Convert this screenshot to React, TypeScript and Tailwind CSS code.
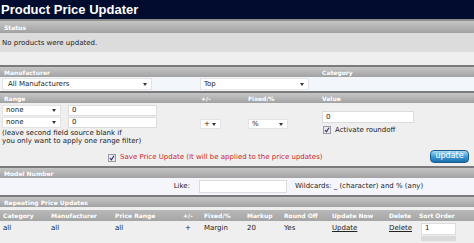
import React from 'react';

function HeaderBar({ children }: { children?: React.ReactNode }) {
  return (
    <div className="h-[12px] border-t-2 border-[#7a7a7a] bg-gradient-to-b from-[#c6c6c6] to-[#a2a2a2] flex items-center text-[6px] font-bold text-white">
      {children}
    </div>
  );
}

function FakeSelect({ value, className }: { value: string; className: string }) {
  return (
    <div className={`bg-white border border-[#e4e4e4] flex items-center justify-between pl-[3px] pr-[4px] text-[7px] text-[#222] ${className}`}>
      <span>{value}</span>
      <svg width="4" height="3" viewBox="0 0 4 3">
        <path d="M0 0 H4 L2 3 Z" fill="#333" />
      </svg>
    </div>
  );
}

function Check({ className }: { className?: string }) {
  return (
    <svg width="8" height="8" viewBox="0 0 8 8" className={className}>
      <rect x="0.5" y="0.5" width="7" height="7" fill="#e9e9ee" stroke="#9a9aa4" />
      <path d="M2 4 L3.4 5.8 L6 1.8" stroke="#2a2a66" strokeWidth="1.1" fill="none" />
    </svg>
  );
}

function TextBox({ value, className }: { value?: string; className: string }) {
  return (
    <div className={`bg-white border border-[#dcdcdc] flex items-center pl-[3px] text-[7px] text-[#222] ${className}`}>
      {value}
    </div>
  );
}

export default function App() {
  return (
    <div className="w-[474px] h-[243px] overflow-hidden bg-[#efefef] font-['DejaVu_Sans',sans-serif] text-[7px] text-[#222]">
      {/* title */}
      <div className="h-[19px] bg-[#020c2e] flex items-center pl-[1px] font-['Liberation_Sans',sans-serif] text-[13px] font-bold text-white">
        Product Price Updater
      </div>
      <div className="h-[2px] bg-[#8e8e8e]" />
      <div className="h-[12px] bg-gradient-to-b from-[#c6c6c6] to-[#a2a2a2] flex items-center pl-[4px] text-[6px] font-bold text-white">
        Status
      </div>
      <div className="h-[19px] bg-[#dcdcdc] flex items-end pb-[4px] pl-[2px]">No products were updated.</div>
      <div className="h-[13px] bg-[#efefef]" />

      {/* manufacturer / category */}
      <HeaderBar>
        <div className="grid grid-cols-[320px_1fr] w-full">
          <span className="pl-[4px]">Manufacturer</span>
          <span className="pl-[2px]">Category</span>
        </div>
      </HeaderBar>
      <div className="h-[14px] bg-[#f3f7fc] grid grid-cols-[200px_1fr] items-center">
        <div className="pl-[2px]">
          <FakeSelect value="All Manufacturers" className="w-[150px] h-[12px] pl-[5px]" />
        </div>
        <FakeSelect value="Top" className="w-[109px] h-[12px]" />
      </div>

      {/* range */}
      <HeaderBar>
        <div className="grid grid-cols-[199px_47px_74px_1fr] w-full">
          <span className="pl-[4px]">Range</span>
          <span className="pl-[2px]">+/-</span>
          <span className="pl-[2px]">Fixed/%</span>
          <span className="pl-[2px]">Value</span>
        </div>
      </HeaderBar>
      <div className="grid grid-cols-[199px_47px_74px_1fr] bg-[#efefef] h-[46px]">
        <div className="pl-[2px] pt-[2px] flex flex-col gap-[1px]">
          <div className="flex gap-[7px]">
            <FakeSelect value="none" className="w-[59px] h-[11px]" />
            <TextBox value="0" className="w-[89px] h-[11px]" />
          </div>
          <div className="flex gap-[7px]">
            <FakeSelect value="none" className="w-[59px] h-[11px]" />
            <TextBox value="0" className="w-[89px] h-[11px]" />
          </div>
          <div className="leading-[8px]">
            (leave second field source blank if
            <br />
            you only want to apply one range filter)
          </div>
        </div>
        <div className="pt-[16px] pl-[1px]">
          <FakeSelect value="+" className="w-[21px] h-[10px]" />
        </div>
        <div className="pt-[16px] pl-[2px]">
          <FakeSelect value="%" className="w-[40px] h-[10px]" />
        </div>
        <div className="pt-[8px] pl-[2px] flex flex-col gap-[2px]">
          <TextBox value="0" className="w-[92px] h-[12px]" />
          <div className="flex items-center gap-[4px] pl-[1px]">
            <Check />
            <span>Activate roundoff</span>
          </div>
        </div>
      </div>

      {/* save row */}
      <div className="h-[17px] bg-[#efefef] flex items-center pl-[108px] pr-[5px]">
        <Check />
        <span className="ml-[4px] text-[#c8262a]">Save Price Update (It will be applied to the price updates)</span>
        <button className="ml-auto mb-[3px] w-[39px] h-[13px] rounded-[4px] border border-[#1b5f8f] bg-gradient-to-b from-[#a6dcf6] via-[#3f9cd8] to-[#1c6fae] text-white text-[8px] leading-none flex items-center justify-center">
          update
        </button>
      </div>

      {/* model number */}
      <HeaderBar>
        <span className="pl-[4px]">Model Number</span>
      </HeaderBar>
      <div className="h-[17px] bg-[#f4f6fb] flex items-center">
        <span className="w-[199px] text-right pr-[9px]">Like:</span>
        <TextBox className="w-[88px] h-[13px]" />
        <span className="ml-[8px]">Wildcards: _ (character) and % (any)</span>
      </div>

      {/* repeating */}
      <HeaderBar>
        <span className="pl-[4px]">Repeating Price Updates</span>
      </HeaderBar>
      <div className="h-[3px] bg-[#efefef]" />
      <div className="h-[11px] bg-gradient-to-b from-[#b8b8b8] to-[#a6a6a6] grid grid-cols-[48px_64px_68px_21px_43px_37px_48px_57px_30px_1fr] items-center pl-[3px] text-[6px] font-bold text-white">
        <span>Category</span>
        <span>Manufacturer</span>
        <span>Price Range</span>
        <span>+/-</span>
        <span>Fixed/%</span>
        <span>Markup</span>
        <span>Round Off</span>
        <span>Update Now</span>
        <span>Delete</span>
        <span>Sort Order</span>
      </div>
      <div className="h-[15px] bg-[#efefef] grid grid-cols-[48px_64px_68px_21px_43px_37px_48px_57px_30px_1fr] items-center pl-[3px]">
        <span>all</span>
        <span>all</span>
        <span>all</span>
        <span className="pl-[2px]">+</span>
        <span>Margin</span>
        <span>20</span>
        <span>Yes</span>
        <span className="underline">Update</span>
        <span className="underline">Delete</span>
        <TextBox value="1" className="w-[35px] h-[12px] ml-[2px]" />
      </div>
      <div className="h-[5px] bg-[#efefef] pl-[421px]">
        <div className="w-[35px] h-[5px] bg-[#dadada]" />
      </div>
    </div>
  );
}
